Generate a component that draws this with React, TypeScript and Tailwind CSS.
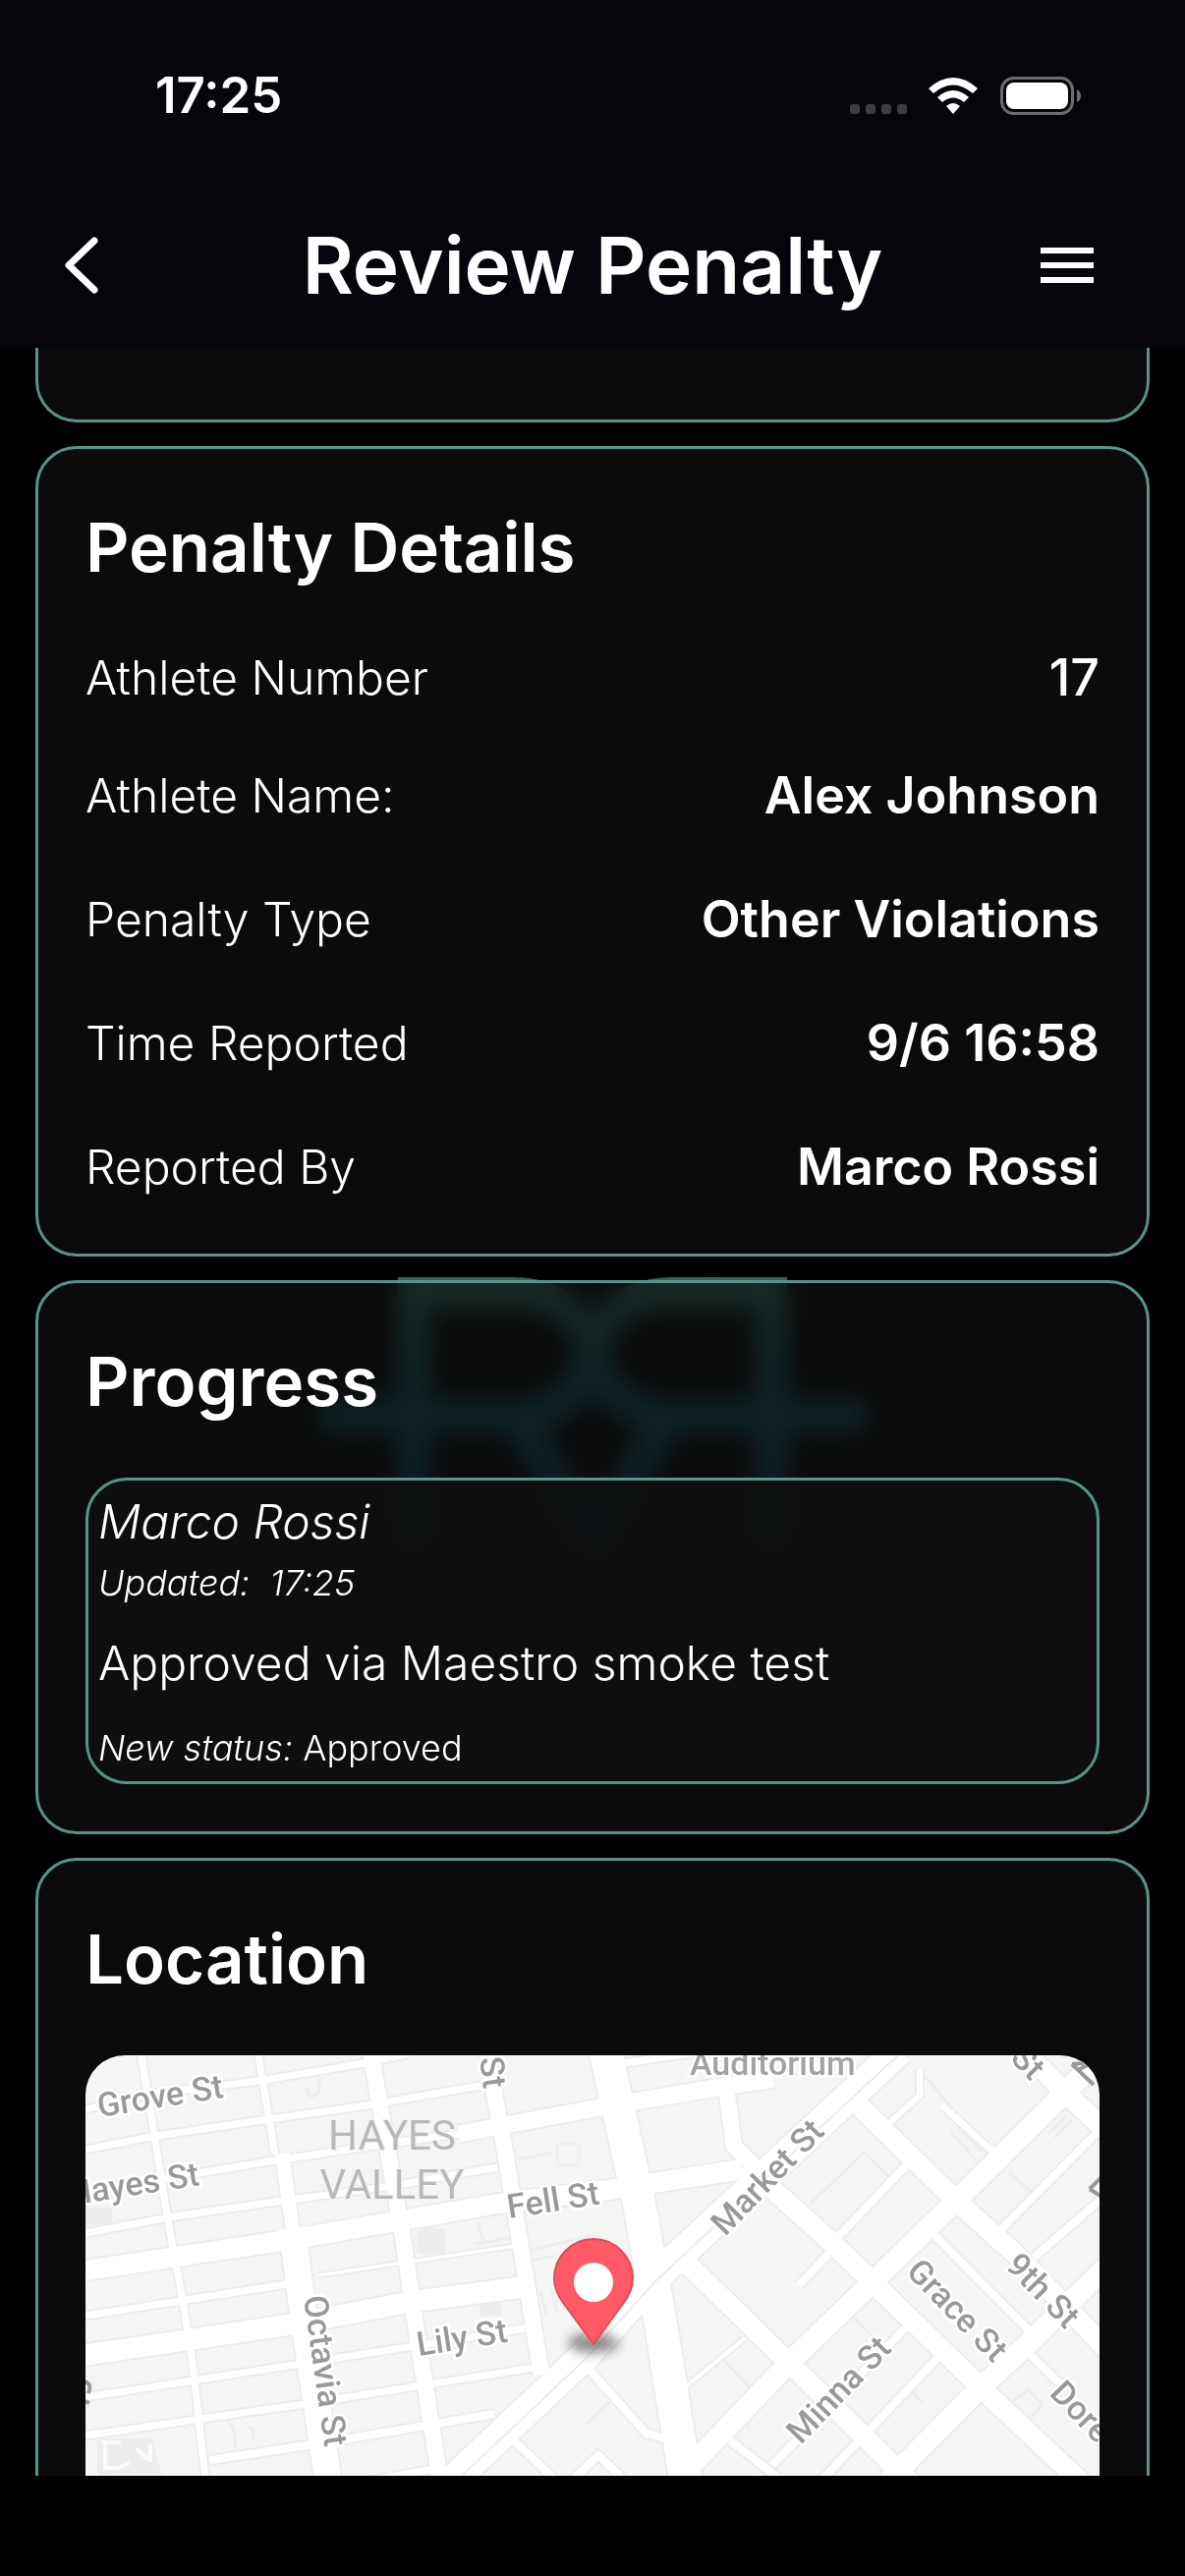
type Row = { label: string; value: string; compact?: boolean };
type Road = { d: string; w: number };
type Label = { text: string; x: number; y: number; r: number };

const details: Row[] = [
  { label: "Athlete Number", value: "17", compact: true },
  { label: "Athlete Name:", value: "Alex Johnson" },
  { label: "Penalty Type", value: "Other Violations" },
  { label: "Time Reported", value: "9/6 16:58" },
  { label: "Reported By", value: "Marco Rossi" },
];

const roads: Road[] = [
  // Hayes Valley, west to east
  { d: "M0 55L62 40L177 26L284 8L330 -2", w: 7 },
  { d: "M0 96L66 83L187 65L287 51L402 31", w: 7 },
  { d: "M0 139L187 108L294 92L380 80", w: 7 },
  { d: "M380 80L523 53L648 32L700 24", w: 17 },
  { d: "M0 181L84 165L201 148L312 133L419 114", w: 7 },
  { d: "M0 219L212 187L420 151L532 137L668 116", w: 20 },
  { d: "M0 265L205 233", w: 7 },
  { d: "M237 224L437 194", w: 3 },
  { d: "M0 305L216 273L330 251L452 235", w: 21 },
  { d: "M0 348L219 314L334 296L448 278", w: 7 },
  { d: "M0 387L223 355L462 317", w: 7 },
  { d: "M127 412L245 394L416 365", w: 8 },
  { d: "M250 440L366 419", w: 7 },
  { d: "M548 8L629 -4", w: 7 },
  // Hayes Valley, north to south
  { d: "M56 -5L71 87L84 169L96 233L109 312L123 440", w: 7 },
  { d: "M175 -5L193 101", w: 7 },
  { d: "M200 100L212 185", w: 14 },
  { d: "M210 176L223 273L248 440", w: 27 },
  { d: "M290 -5L309 105L325 198L334 262L362 440", w: 16 },
  { d: "M408 -5L427 98L441 183L464 325", w: 16 },
  { d: "M529 -5L563 148L586 277L612 440", w: 33 },
  // Market and the streets south of it
  { d: "M366 440L509 305L579 227L729 87L828 -5", w: 30 },
  { d: "M652 32L660 92L683 116", w: 16 },
  { d: "M672 112L760 191L801 231L911 338L1019 440", w: 20 },
  { d: "M780 44L842 105L886 148L946 202L1040 300", w: 20 },
  { d: "M609 209L716 313L845 440", w: 20 },
  { d: "M955 -5L996 37L1040 78", w: 20 },
  { d: "M1040 -5L886 148L801 231L716 313L595 440", w: 21 },
  { d: "M1040 214L961 292L911 338L810 440", w: 21 },
  { d: "M838 274L699 417", w: 8 },
  { d: "M869 306L742 440", w: 8 },
  { d: "M842 105L760 191", w: 8 },
  { d: "M760 198L726 234", w: 8 },
  { d: "M1030 78L929 180", w: 8 },
  { d: "M1034 146L965 206", w: 8 },
  { d: "M861 180L961 281", w: 8 },
  { d: "M872 51L923 98", w: 7 },
  { d: "M849 15L849 41L818 69", w: 6 },
  { d: "M956 300L996 338", w: 8 },
  { d: "M656 392L705 430", w: 8 },
  { d: "M509 316L571 385L590 390", w: 8 },
  { d: "M610 338L671 288", w: 4 },
  { d: "M434 390L480 434", w: 8 },
  { d: "M494 434L522 407L552 436", w: 8 },
];

const outlines = [
  "M226 32v8q6 4 12-2v-14",
  "M440 106L476 99M446 200L515 184M446 210L478 204M463 240l6 24M474 238l6 24M484 240l4 20",
  "M399 170L406 192M395 192L432 186M738 151L792 99L818 124M853 19L880 52M880 78L906 106M888 72L912 98",
  "M980 80L998 62M986 84L1004 66M940 120L964 140M780 265L812 296M650 310L690 354M676 380L662 362",
  "M144 372q10 6 8 28M166 378q8 4 4 12M938 356L960 340L974 356L956 374M840 340L852 354M510 375L534 352",
];

const streets: Label[] = [
  { text: "Grove St", x: 14, y: 63, r: -9 },
  { text: "Hayes St", x: -16, y: 153, r: -9 },
  { text: "Fell St", x: 431, y: 166, r: -9 },
  { text: "Lily St", x: 339, y: 306, r: -9 },
  { text: "Octavia St", x: 222, y: 246, r: 82 },
  { text: "St", x: 401, y: 3, r: 82 },
  { text: "Market St", x: 651, y: 185, r: -46 },
  { text: "Minna St", x: 728, y: 397, r: -46 },
  { text: "Grace St", x: 834, y: 221, r: 46 },
  { text: "9th St", x: 935, y: 215, r: 46 },
  { text: "Dore", x: 980, y: 345, r: 46 },
  { text: "St", x: 940, y: 4, r: 46 },
];

const StatusBar = () => (
  <div className="flex h-[194px] items-center justify-between pl-[158px] pr-[106px]">
    <span className="text-[51px] font-semibold leading-[60px]">17:25</span>
    <div className="flex items-center">
      <svg width="236" height="40" viewBox="0 0 236 40" aria-hidden="true">
        <g fill="#3b3b41">
          <rect x="1" y="29" width="10" height="10" rx="3" />
          <rect x="17" y="29" width="10" height="10" rx="3" />
          <rect x="33" y="29" width="10" height="10" rx="3" />
          <rect x="49" y="29" width="10" height="10" rx="3" />
        </g>
        <g fill="#fff">
          <path d="M81 13Q106 -9 131 13L126 18Q106 1 86 18Z" />
          <path d="M90 22Q106 8 122 22L117 27Q106 18 95 27Z" />
          <path d="M99 31Q106 25 113 31L106 39Z" />
        </g>
        <rect x="155.500" y="2.500" width="72" height="36" rx="12" fill="none" stroke="#6b6b70" strokeWidth="3" />
        <rect x="160" y="7" width="63" height="27" rx="8" fill="#fff" />
        <path d="M232 14q4 2 4 6.500t-4 6.500z" fill="#6b6b70" />
      </svg>
    </div>
  </div>
);

const Watermark = () => (
  <svg
    className="absolute left-1/2 top-[946px] -translate-x-1/2"
    width="570"
    height="280"
    viewBox="318 1300 570 280"
    aria-hidden="true"
  >
    <defs>
      <linearGradient id="mark" gradientUnits="userSpaceOnUse" x1="0" y1="1300" x2="0" y2="1580">
        <stop offset="0" stopColor="#32665b" />
        <stop offset="0.3" stopColor="#17545a" />
        <stop offset="0.5" stopColor="#0d5060" />
        <stop offset="1" stopColor="#0b3f5a" />
      </linearGradient>
    </defs>
    <g fill="none" stroke="url(#mark)" strokeWidth="32">
      <path d="M421 1572V1316H522C570 1316 603 1350 603 1382C592 1412 570 1441 525 1441H327" />
      <path d="M785 1572V1316H684C636 1316 603 1350 603 1382C614 1412 636 1441 681 1441H881" />
      <path d="M528 1446L603 1566L678 1446" />
    </g>
  </svg>
);

const StreetMap = () => (
  <svg
    className="block h-[560px] w-full rounded-[40px] bg-[#f5f6f4]"
    viewBox="0 0 1032 560"
    preserveAspectRatio="xMidYMin slice"
    role="img"
    aria-label="Map"
  >
    <defs>
      <filter id="shade" x="-50%" y="-100%" width="200%" height="300%">
        <feGaussianBlur stdDeviation="6" />
      </filter>
    </defs>
    <g fill="#ebeeed">
      <path d="M337 176h29v26h-29zM401 251h22v14h-22zM0 155h27v18H0zM12 390h56l10 40H12z" />
    </g>
    <path d="M16 394h20M20 396v24h14l12-6M52 400l12 12M66 396v18" fill="none" stroke="#f9faf9" strokeWidth="4" />
    <g fill="none" stroke="#eaeeed" strokeWidth="3">
      {outlines.map((d) => (
        <path key={d} d={d} />
      ))}
    </g>
    <rect x="480" y="90" width="22" height="22" rx="3" fill="none" stroke="#eef1f0" strokeWidth="4" />
    <g fill="none" stroke="#e9eeec">
      {roads.map((road) => (
        <path key={road.d} d={road.d} strokeWidth={road.w + 4} />
      ))}
    </g>
    <g fill="none" stroke="#fff" strokeLinejoin="round">
      {roads.map((road) => (
        <path key={road.d} d={road.d} strokeWidth={road.w} />
      ))}
    </g>
    <path d="M366 444L509 309L579 231L729 91L828 -1" fill="none" stroke="#eceeed" strokeWidth="2" />
    <g
      fill="#999"
      stroke="#fff"
      strokeWidth="5"
      paintOrder="stroke"
      fontFamily="Roboto, sans-serif"
      fontSize="34"
      fontWeight="500"
    >
      {streets.map((s) => (
        <text key={`${s.text}${s.x}`} transform={`translate(${s.x} ${s.y}) rotate(${s.r})`}>
          {s.text}
        </text>
      ))}
      <text x="615" y="20" fill="#a3a3a3">
        Auditorium
      </text>
    </g>
    <g
      fill="#b9b9b9"
      stroke="#f5f6f4"
      strokeWidth="3"
      paintOrder="stroke"
      fontFamily="Roboto, sans-serif"
      fontSize="42"
      textAnchor="middle"
    >
      <text x="312" y="96">HAYES</text>
      <text x="312" y="146">VALLEY</text>
    </g>
    <g fill="none" stroke="#999" strokeWidth="4">
      <path d="M1004 9L1026 30M1004 9L1016 8M1010 15L1020 10" />
      <path d="M1022 136L1034 144M1022 136L1034 124" />
      <path d="M-1 332q8 2 4 12M0 352l4 2" />
    </g>
    <ellipse cx="517" cy="293" rx="26" ry="10" fill="#000" opacity="0.45" filter="url(#shade)" />
    <path
      d="M517 294L487 253C480 244 477 236 477 227A40 40 0 0 1 557 227C557 236 554 244 547 253Z"
      fill="#ff5a66"
      stroke="#d94f5b"
      strokeWidth="2"
    />
    <circle cx="517" cy="231" r="20" fill="#fff" />
  </svg>
);

const Card = ({ title, children }: { title: string; children: React.ReactNode }) => (
  <section className="rounded-[42px] border-[3px] border-[#55938b] bg-[#101010]/70 p-12 backdrop-blur-[12px]">
    <h2 className="mb-[46px] text-[69px] font-semibold leading-[104px]">{title}</h2>
    {children}
  </section>
);

const App = () => {
  return (
    <div className="flex h-screen flex-col overflow-hidden bg-black font-['Inter',sans-serif] text-white">
      <header className="z-10 h-[354px] shrink-0 bg-[#05050b]">
        <StatusBar />
        <div className="grid h-[152px] grid-cols-[1fr_auto_1fr] items-center pl-[60px] pr-[88px]">
          <button type="button" aria-label="Back" className="w-[88px] justify-self-start">
            <svg width="48" height="60" viewBox="0 0 48 60" fill="none" stroke="#fff" strokeWidth="7" strokeLinecap="round" strokeLinejoin="round">
              <path d="M36 5L10 30L36 55" />
            </svg>
          </button>
          <h1 className="pl-7 text-[80px] font-semibold leading-[104px]">Review Penalty</h1>
          <button type="button" aria-label="Menu" className="justify-self-end">
            <svg width="64" height="36" viewBox="0 0 64 36" fill="#fff">
              <path d="M5 0h54v6H5zM5 15h54v6H5zM5 30h54v6H5z" />
            </svg>
          </button>
        </div>
      </header>

      <main className="relative min-h-0 flex-1 overflow-hidden px-9">
        <Watermark />
        <div className="flex flex-col gap-6">
          <div className="h-[76px] rounded-b-[42px] border-[3px] border-t-0 border-[#55938b] bg-[#101010]/70" />

          <Card title="Penalty Details">
            <dl className="flex flex-col gap-[46px]">
              {details.map((row) => (
                <div
                  key={row.label}
                  className={`${row.compact ? "h-[69px]" : "h-20"} flex items-center justify-between`}
                >
                  <dt className="text-[48px] font-light leading-[60px]">{row.label}</dt>
                  <dd className={`${row.compact ? "font-medium" : "font-semibold"} text-[52px] leading-[66px]`}>
                    {row.value}
                  </dd>
                </div>
              ))}
            </dl>
          </Card>

          <Card title="Progress">
            <div className="rounded-[42px] border-[3px] border-[#55938b] bg-[#0f0f0f]/80 px-[10px] pb-[10px] pt-3 font-light">
              <p className="text-[48px] italic leading-[60px]">Marco Rossi</p>
              <p className="mt-2 whitespace-pre text-[36px] italic leading-[48px]">{"Updated:  17:25"}</p>
              <p className="mt-7 text-[48px] leading-[60px]">Approved via Maestro smoke test</p>
              <p className="mt-8 text-[36px] leading-[48px]">
                <span className="italic">New status:</span> Approved
              </p>
            </div>
          </Card>

          <Card title="Location">
            <StreetMap />
          </Card>
        </div>
      </main>
      <footer className="h-[102px] shrink-0 bg-black" />
    </div>
  );
};

export default App;
